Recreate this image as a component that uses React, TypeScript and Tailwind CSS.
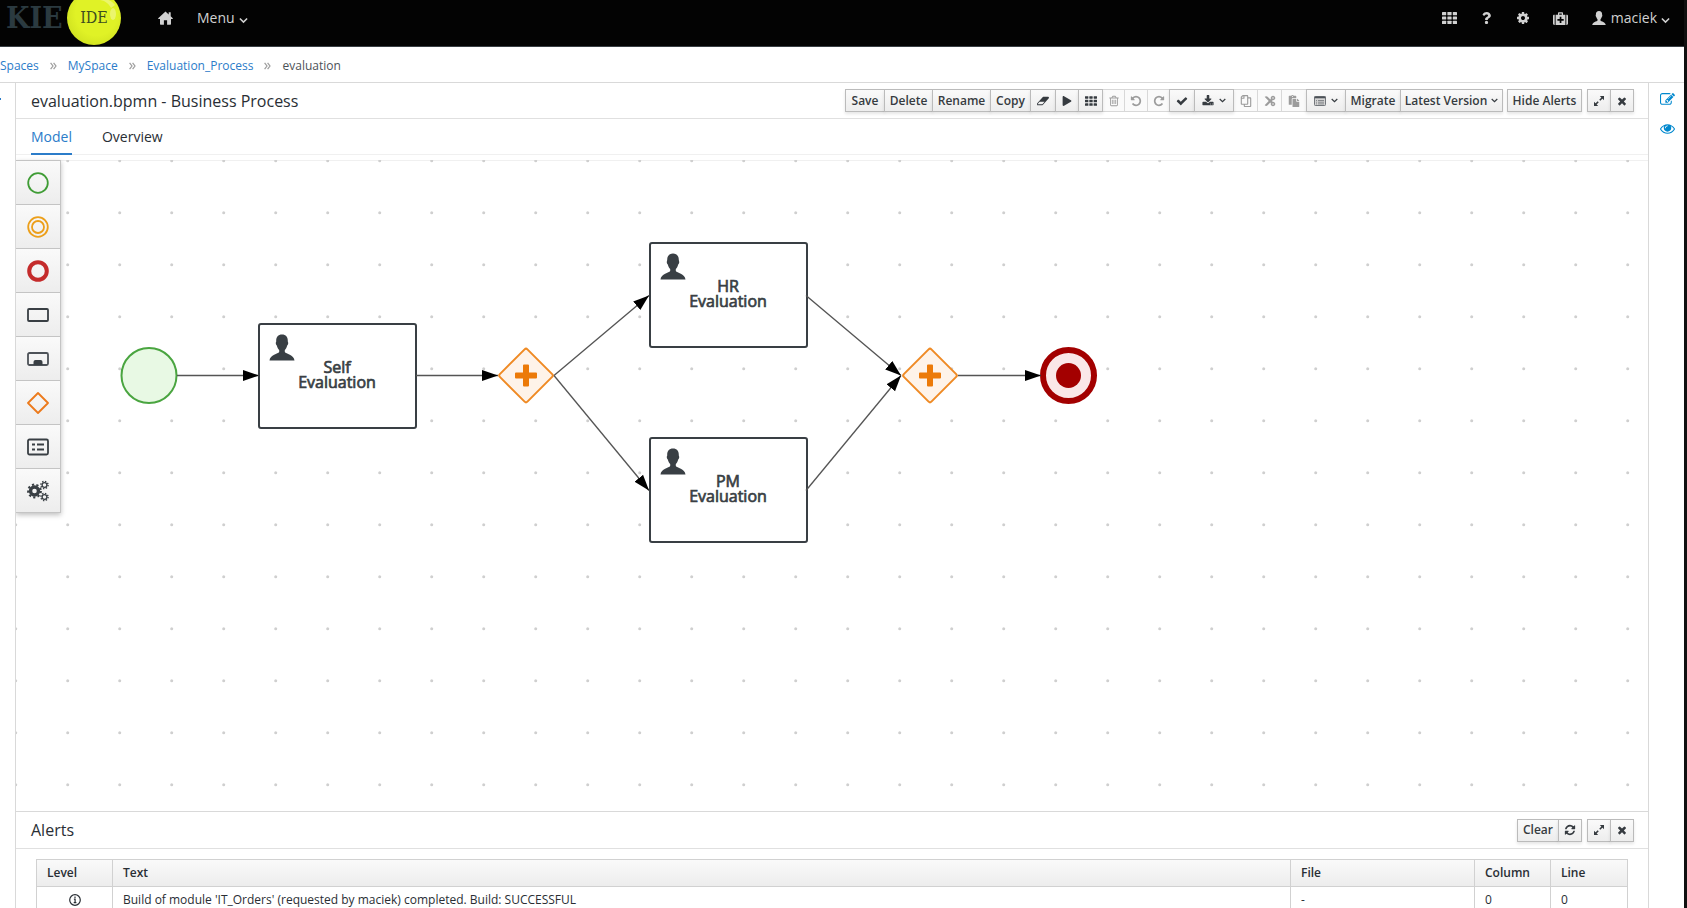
import { useState, type ReactNode } from 'react';
import { FaCut, FaPaste, FaPlay, FaQuestion, FaRegCopy } from 'react-icons/fa';

const paths = {
  eye: 'M1664 960q-152-236-381-353 61 104 61 225 0 185-131.5 316.5t-316.5 131.5-316.5-131.5-131.5-316.5q0-121 61-225-229 117-381 353 133 205 333.5 326.5t434.5 121.5 434.5-121.5 333.5-326.5zm-720-384q0-20-14-34t-34-14q-125 0-214.5 89.5t-89.5 214.5q0 20 14 34t34 14 34-14 14-34q0-86 61-147t147-61q20 0 34-14t14-34zm848 384q0 34-20 69-140 230-376.5 368.5t-499.5 138.5-499.5-139-376.5-368q-20-35-20-69t20-69q140-229 376.5-368t499.5-139 499.5 139 376.5 368q20 35 20 69z',
  edit: 'M888 1184l116-116-152-152-116 116v56h96v96h56zm440-720q-16-16-33 1l-350 350q-17 17-1 33t33-1l350-350q17-17 1-33zm80 594v190q0 119-84.5 203.5t-203.5 84.5h-832q-119 0-203.5-84.5t-84.5-203.5v-832q0-119 84.5-203.5t203.5-84.5h832q63 0 117 25 15 7 18 23 3 17-9 29l-49 49q-14 14-32 8-23-6-45-6h-832q-66 0-113 47t-47 113v832q0 66 47 113t113 47h832q66 0 113-47t47-113v-126q0-13 9-22l64-64q15-15 35-7t20 29zm-96-738l288 288-672 672h-288v-288zm444 132l-92 92-288-288 92-92q28-28 68-28t68 28l152 152q28 28 28 68t-28 68z',
  trash: 'M704 736v576q0 14-9 23t-23 9h-64q-14 0-23-9t-9-23v-576q0-14 9-23t23-9h64q14 0 23 9t9 23zm256 0v576q0 14-9 23t-23 9h-64q-14 0-23-9t-9-23v-576q0-14 9-23t23-9h64q14 0 23 9t9 23zm256 0v576q0 14-9 23t-23 9h-64q-14 0-23-9t-9-23v-576q0-14 9-23t23-9h64q14 0 23 9t9 23zm128 724v-948h-896v948q0 22 7 40.5t14.5 27 10.5 8.5h832q3 0 10.5-8.5t14.5-27 7-40.5zm-672-1076h448l-48-117q-7-9-17-11h-317q-10 2-17 11zm928 32v64q0 14-9 23t-23 9h-96v948q0 83-47 143.5t-113 60.5h-832q-66 0-113-58.5t-47-141.5v-952h-96q-14 0-23-9t-9-23v-64q0-14 9-23t23-9h309l70-167q15-37 54-63t79-26h320q40 0 79 26t54 63l70 167h309q14 0 23 9t9 23z',
  refresh: 'M1639 1056q0 5-1 7-64 268-268 434.5t-478 166.5q-146 0-282.5-55t-243.5-157l-129 129q-19 19-45 19t-45-19-19-45v-448q0-26 19-45t45-19h448q26 0 45 19t19 45-19 45l-137 137q71 66 161 102t187 36q134 0 250-65t186-179q11-17 53-117 8-23 30-23h192q13 0 22.5 9.5t9.5 22.5zm25-800v448q0 26-19 45t-45 19h-448q-26 0-45-19t-19-45 19-45l138-138q-148-137-349-137-134 0-250 65t-186 179q-11 17-53 117-8 23-30 23h-199q-13 0-22.5-9.5t-9.5-22.5v-7q65-268 270-434.5t480-166.5q146 0 284 55.5t245 156.5l130-129q19-19 45-19t45 19 19 45z',
  undo: 'M1664 896q0 156-61 298t-164 245-245 164-298 61q-172 0-327-72.5t-264-204.5q-7-10-6.5-22.5t8.5-20.5l137-138q10-9 25-9 16 2 23 12 73 95 179 147t225 52q104 0 198.5-40.5t163.5-109.5 109.5-163.5 40.5-198.5-40.5-198.5-109.5-163.5-163.5-109.5-198.5-40.5q-98 0-188 35.5t-160 101.5l137 138q31 30 14 69-17 40-59 40h-448q-26 0-45-19t-19-45v-448q0-42 40-59 39-17 69 14l130 129q107-101 244.5-156.5t284.5-55.5q156 0 298 61t245 164 164 245 61 298z',
  eraser: 'M832 1408l336-384h-768l-336 384h768zm1013-1077q15 34 9.5 71.5t-30.5 65.5l-896 1024q-38 44-96 44h-768q-38 0-69.5-20.5t-47.5-54.5q-15-34-9.5-71.5t30.5-65.5l896-1024q38-44 96-44h768q38 0 69.5 20.5t47.5 54.5z',
  check: 'M1671 566q0 40-28 68l-724 724-136 136q-28 28-68 28t-68-28l-136-136-362-362q-28-28-28-68t28-68l136-136q28-28 68-28t68 28l294 295 656-657q28-28 68-28t68 28l136 136q28 28 28 68z',
  close: 'M1490 1322q0 40-28 68l-136 136q-28 28-68 28t-68-28l-294-294-294 294q-28 28-68 28t-68-28l-136-136q-28-28-28-68t28-68l294-294-294-294q-28-28-28-68t28-68l136-136q28-28 68-28t68 28l294 294 294-294q28-28 68-28t68 28l136 136q28 28 28 68t-28 68l-294 294 294 294q28 28 28 68z',
  download: 'M1344 1344q0-26-19-45t-45-19-45 19-19 45 19 45 45 19 45-19 19-45zm256 0q0-26-19-45t-45-19-45 19-19 45 19 45 45 19 45-19 19-45zm128-224v320q0 40-28 68t-68 28h-1472q-40 0-68-28t-28-68v-320q0-40 28-68t68-28h465l135 136q58 56 136 56t136-56l136-136h464q40 0 68 28t28 68zm-325-569q17 41-14 70l-448 448q-18 19-45 19t-45-19l-448-448q-31-29-14-70 17-39 59-39h256v-448q0-26 19-45t45-19h256q26 0 45 19t19 45v448h256q42 0 59 39z',
  cog: 'M1152 896q0-106-75-181t-181-75-181 75-75 181 75 181 181 75 181-75 75-181zm512-109v222q0 12-8 23t-20 13l-185 28q-19 54-39 91 35 50 107 138 10 12 10 25t-9 23q-27 37-99 108t-94 71q-12 0-26-9l-138-108q-44 23-91 38-16 136-29 186-7 28-36 28h-222q-14 0-24.5-8.5t-11.5-21.5l-28-184q-49-16-90-37l-141 107q-10 9-25 9-14 0-25-11-126-114-165-168-7-10-7-23 0-12 8-23 15-21 51-66.5t54-70.5q-27-50-41-99l-183-27q-13-2-21-12.5t-8-23.5v-222q0-12 8-23t19-13l186-28q14-46 39-92-40-57-107-138-10-12-10-24 0-10 9-23 26-36 98.5-107.5t94.5-71.5q13 0 26 10l138 107q44-23 91-38 16-136 29-186 7-28 36-28h222q14 0 24.5 8.5t11.5 21.5l28 184q49 16 90 37l142-107q9-9 24-9 13 0 25 10 129 119 165 170 7 8 7 22 0 12-8 23-15 21-51 66.5t-54 70.5q26 50 41 98l183 28q13 2 21 12.5t8 23.5z',
};

const userPath =
  'M12.5 0C8.6 0 6.6 2.6 6.7 6.4c.1 1-.6 1.300-.4 2.500.2 1.300.8 1.600 1.100 2.300.4 2 1.300 3.200 2.300 4.200v2.200C8.600 19.600 .5 20.300 0 26h25c-.5-5.700-8.600-6.400-9.700-8.400v-2.200c1-1 1.900-2.200 2.300-4.200.3-.7.900-1 1.100-2.300.2-1.200-.5-1.500-.4-2.500C18.400 2.600 16.400 0 12.500 0z';

function Icon({ name, className = 'size-3' }: { name: keyof typeof paths; className?: string }) {
  return (
    <svg viewBox={name === 'eraser' ? '0 0 1856 1792' : '0 0 1792 1792'} fill="currentColor" className={className} aria-hidden="true">
      <path d={paths[name]} />
    </svg>
  );
}

function Chevron({ className = 'size-[7px]' }: { className?: string }) {
  return (
    <svg viewBox="0 0 10 10" fill="none" stroke="currentColor" strokeWidth="1.7" className={className} aria-hidden="true">
      <path d="M1 2.800l4 4 4-4" />
    </svg>
  );
}

function GridIcon({ className = 'size-3' }: { className?: string }) {
  return (
    <svg viewBox="0 0 15 12" fill="currentColor" className={className} aria-hidden="true">
      {[0, 4.4, 8.8].map((y) =>
        [0, 5.4, 10.8].map((x) => <rect key={`${x}-${y}`} x={x} y={y} width="4.2" height="3.2" rx="0.5" />),
      )}
    </svg>
  );
}

function ExpandIcon() {
  return (
    <svg viewBox="0 0 12 12" fill="currentColor" className="size-3" aria-hidden="true">
      <path d="M6.8 1h4.2v4.2zM1 6.8V11h4.2z" />
      <path d="M9.5 2.5L6.8 5.2M2.5 9.5l2.7-2.7" stroke="currentColor" strokeWidth="1.6" fill="none" />
    </svg>
  );
}

function ListIcon() {
  return (
    <svg viewBox="0 0 12 10" className="h-[10px] w-3" aria-hidden="true">
      <rect x="0.5" y="0.5" width="11" height="9" rx="0.8" fill="#d4d4d4" stroke="#72767b" />
      <path d="M0.5 1.400h11" stroke="#4d5258" strokeWidth="1.800" />
      <path d="M2 4.500h1M2 6.200h1M2 7.900h1M4 4.500h6M4 6.200h6M4 7.900h6" stroke="#72767b" strokeWidth="0.800" />
    </svg>
  );
}

type ToolProps = {
  label?: string;
  width: string;
  disabled?: boolean;
  children?: ReactNode;
};

function Tool({ label, width, disabled, children }: ToolProps) {
  return (
    <button
      type="button"
      aria-label={label}
      disabled={disabled}
      className={`-ml-px flex h-[23px] items-center justify-center gap-1 border text-xs font-semibold whitespace-nowrap first:ml-0 ${width} ${
        disabled
          ? 'border-[#d8d8d8] bg-[#fafafa] text-[#9c9c9c]'
          : 'relative border-[#bbb] bg-linear-to-b from-[#fafafa] to-[#ededed] text-[#363b40] shadow-[0_2px_3px_rgba(3,3,3,0.1)]'
      }`}
    >
      {children}
    </button>
  );
}

function WindowTools({ name }: { name: string }) {
  return (
    <div className="flex">
      <Tool label={`Expand ${name}`} width="w-6">
        <ExpandIcon />
      </Tool>
      <Tool label={`Close ${name}`} width="w-6">
        <Icon name="close" />
      </Tool>
    </div>
  );
}

function Header() {
  return (
    <header className="flex h-[47px] shrink-0 items-start justify-between overflow-hidden border-b border-[#393f44] bg-[#030303] text-[#d1d1d1]">
      <div className="flex h-9 items-center">
        <a href="#" aria-label="KIE IDE" className="flex items-center gap-2 pl-[6px]">
          <span className="w-[53px] font-['DejaVu_Serif_Condensed','DejaVu_Serif',serif] text-[30px] leading-none font-bold text-[#2b3a40]">
            KIE
          </span>
          <span className="relative flex size-[54px] items-center justify-center overflow-hidden rounded-full bg-radial-[at_55%_40%] from-[#e0f226] from-50% to-[#c3d41b]">
            <svg viewBox="0 0 54 54" className="absolute inset-0" aria-hidden="true">
              <path d="M33 9c6 1 9 4 11 8l4-3C45 10 40 7 33 9z" fill="#f0f68a" opacity="0.7" />
              <ellipse cx="46" cy="23" rx="3" ry="6" fill="#f0f68a" opacity="0.7" />
            </svg>
            <span className="relative font-['DejaVu_Serif_Condensed','DejaVu_Serif',serif] text-base leading-none text-[#3d4d20]">
              IDE
            </span>
          </span>
        </a>
        <a href="#" aria-label="Home" className="ml-[37px]">
          <svg viewBox="0 0 15 14" fill="currentColor" className="h-[14px] w-[15px]" aria-hidden="true">
            <path d="M7.5.5L.2 7.300c-.2.300 0 .6.300.600H2V13c0 .5.200.7.700.7h3.200V9.200h3.200v4.500h3.200c.5 0 .7-.2.700-.7V7.900h1.500c.3 0 .5-.3.300-.600L12.700 5.200V1.300h-2v2.200z" />
          </svg>
        </a>
        <button type="button" className="ml-6 flex items-center gap-1 text-sm font-medium">
          Menu <Chevron className="mt-1 size-[9px]" />
        </button>
      </div>
      <div className="flex h-9 items-center pr-[14px]">
        <button type="button" aria-label="Apps" className="mr-[25px]">
          <GridIcon className="h-3 w-[15px]" />
        </button>
        <button type="button" aria-label="Help" className="mr-[25px]">
          <FaQuestion className="h-3 w-[9px]" />
        </button>
        <button type="button" aria-label="Settings" className="mr-[23px]">
          <Icon name="cog" className="size-[14px]" />
        </button>
        <button type="button" aria-label="Diagnostics" className="mr-6">
          <svg viewBox="0 0 15 13" fill="currentColor" className="h-[13px] w-[15px]" aria-hidden="true">
            <path d="M5 3V1.200C5 .5 5.300.2 6 .2h3c.7 0 1 .3 1 1V3H8.800V1.400H6.200V3z" />
            <path d="M1.700 2.800v10.100H1.300C.5 12.900 0 12.400 0 11.600V4.100c0-.8.500-1.300 1.300-1.300zM13.300 2.800v10.100h.4c.8 0 1.300-.5 1.300-1.300V4.100c0-.8-.5-1.300-1.300-1.300z" />
            <path d="M2.600 2.800h9.800v10.100H2.600zM6.700 4.700v2.300H4.400v1.700h2.300V11h1.700V8.700h2.300V7H8.400V4.700z" fillRule="evenodd" />
          </svg>
        </button>
        <button type="button" className="flex items-center gap-1 text-sm font-medium">
          <svg viewBox="0 0 25 26" fill="currentColor" className="mr-px size-[14px]" aria-hidden="true">
            <path d={userPath} />
          </svg>
          maciek <Chevron className="mt-1 size-[9px]" />
        </button>
      </div>
    </header>
  );
}

const crumbs = ['Spaces', 'MySpace', 'Evaluation_Process'];

function Breadcrumbs() {
  return (
    <nav aria-label="Breadcrumb" className="flex h-9 shrink-0 items-center border-b border-[#d9d9d9] pt-[3px] text-xs">
      {crumbs.map((crumb) => (
        <span key={crumb} className="flex items-center">
          <a href="#" className="text-[#2b7cc9]">
            {crumb}
          </a>
          <svg viewBox="0 0 7 8" fill="none" stroke="#9c9c9c" strokeWidth="1.2" className="mx-[11px] h-2 w-[7px]" aria-hidden="true">
            <path d="M.6.8L3 4 .6 7.200M3.600.8L6 4 3.600 7.200" />
          </svg>
        </span>
      ))}
      <span className="text-[#4d5258]">evaluation</span>
    </nav>
  );
}

function EditorToolbar() {
  return (
    <div className="flex gap-1">
      <div className="flex">
        <Tool width="w-10">Save</Tool>
        <Tool width="w-[49px]">Delete</Tool>
        <Tool width="w-[59px]">Rename</Tool>
        <Tool width="w-[41px]">Copy</Tool>
        <Tool label="Clear diagram" width="w-[26px]">
          <Icon name="eraser" />
        </Tool>
        <Tool label="Run" width="w-6">
          <FaPlay className="size-[10px]" />
        </Tool>
        <Tool label="Grid" width="w-[25px]">
          <GridIcon className="h-[10px] w-3" />
        </Tool>
        <Tool label="Delete selection" width="w-[23px]" disabled>
          <Icon name="trash" />
        </Tool>
        <Tool label="Undo" width="w-6" disabled>
          <Icon name="undo" />
        </Tool>
        <Tool label="Redo" width="w-[23px]" disabled>
          <Icon name="undo" className="size-3 -scale-x-100" />
        </Tool>
        <Tool label="Validate" width="w-[26px]">
          <Icon name="check" />
        </Tool>
        <Tool label="Download" width="w-10">
          <Icon name="download" />
          <Chevron className="ml-px size-[7px]" />
        </Tool>
        <Tool label="Copy selection" width="w-[25px]" disabled>
          <FaRegCopy className="size-3 -scale-x-100" />
        </Tool>
        <Tool label="Cut selection" width="w-[25px]" disabled>
          <FaCut className="size-3 -scale-x-100" />
        </Tool>
        <Tool label="Paste selection" width="w-[26px]" disabled>
          <FaPaste className="size-3" />
        </Tool>
        <Tool label="View" width="w-10">
          <ListIcon />
          <Chevron className="ml-px size-[7px]" />
        </Tool>
        <Tool width="w-14">Migrate</Tool>
        <Tool width="w-[103px]">
          Latest Version <Chevron />
        </Tool>
      </div>
      <div className="flex">
        <Tool width="w-[75px]">Hide Alerts</Tool>
      </div>
      <div className="ml-px flex">
        <WindowTools name="editor" />
      </div>
    </div>
  );
}

const palette: { label: string; shape: ReactNode }[] = [
  { label: 'Start events', shape: <circle cx="11" cy="11" r="9.8" stroke="#3f9c35" strokeWidth="1.8" /> },
  {
    label: 'Intermediate events',
    shape: (
      <g stroke="#ec9f1a" strokeWidth="1.8">
        <circle cx="11" cy="11" r="9.8" />
        <circle cx="11" cy="11" r="6" />
      </g>
    ),
  },
  { label: 'End events', shape: <circle cx="11" cy="11" r="8.8" stroke="#c42b2b" strokeWidth="4" /> },
  { label: 'Activities', shape: <rect x="1" y="5" width="20" height="12" rx="1" stroke="#393f44" strokeWidth="1.8" /> },
  {
    label: 'Subprocesses',
    shape: (
      <g>
        <rect x="1" y="5" width="20" height="12" rx="1.5" stroke="#4d5258" strokeWidth="1.8" />
        <path d="M6.500 17v-3q0-2 2-2h5q2 0 2 2v3z" fill="#393f44" />
      </g>
    ),
  },
  { label: 'Gateways', shape: <path d="M11 1L21 11 11 21 1 11z" stroke="#ec7a1c" strokeWidth="1.8" strokeLinejoin="round" /> },
  {
    label: 'Data objects',
    shape: (
      <g stroke="#393f44">
        <rect x="1" y="3.5" width="20" height="15" rx="1.5" strokeWidth="1.8" />
        <path d="M5 8.500h3M5 13.500h3M10 8.500h7M10 13.500h7" strokeWidth="2.2" />
      </g>
    ),
  },
  {
    label: 'Service tasks',
    shape: (
      <g stroke="#393f44">
        <circle cx="7.5" cy="11" r="4" strokeWidth="3.4" />
        <circle cx="7.5" cy="11" r="6.4" strokeWidth="2" strokeDasharray="2.2 2.268" />
        <circle cx="17.5" cy="5" r="2.4" strokeWidth="1.3" />
        <circle cx="17.5" cy="5" r="3.6" strokeWidth="1.4" strokeDasharray="1.4 1.427" />
        <circle cx="17.5" cy="17" r="2.4" strokeWidth="1.3" />
        <circle cx="17.5" cy="17" r="3.6" strokeWidth="1.4" strokeDasharray="1.4 1.427" />
      </g>
    ),
  },
];

function Palette() {
  return (
    <div className="absolute top-[5px] left-0 w-[45px] border-t border-r border-[#c4c4c4] shadow-[0_2px_5px_rgba(3,3,3,0.25)]">
      {palette.map(({ label, shape }) => (
        <button
          key={label}
          type="button"
          aria-label={label}
          className="flex h-11 w-full items-center justify-center border-b border-[#c4c4c4] bg-linear-to-b from-[#fafafa] to-[#ededed]"
        >
          <svg viewBox="0 0 22 22" fill="none" className="size-[22px]" aria-hidden="true">
            {shape}
          </svg>
        </button>
      ))}
    </div>
  );
}

const tasks = [
  { name: 'Self', x: 242, y: 168 },
  { name: 'HR', x: 633, y: 87 },
  { name: 'PM', x: 633, y: 282 },
];

const flows = [
  [161, 220, 243, 220],
  [400, 220, 482, 220],
  [538, 220, 633, 140],
  [538, 220, 633, 335],
  [790, 140, 885, 220],
  [790, 335, 885, 220],
  [942, 220, 1025, 220],
];

function Diagram() {
  return (
    <svg className="absolute inset-0 size-full font-['Open_Sans',sans-serif]" role="img" aria-label="Evaluation process">
      <defs>
        <pattern id="dots" width="52" height="52" patternUnits="userSpaceOnUse" x="26" y="32">
          <circle cx="25.7" cy="25.7" r="1.5" fill="#cfcfcf" />
        </pattern>
        <marker id="arrow" markerUnits="userSpaceOnUse" markerWidth="17" markerHeight="12" refX="16" refY="6" orient="auto">
          <path d="M0 0.500L16 6 0 11.500z" fill="#000" />
        </marker>
      </defs>
      <path d="M0 5.500H4000" stroke="#f0f0f0" />
      <rect y="5" width="100%" height="100%" fill="url(#dots)" />
      <circle cx="133" cy="220.500" r="27.500" fill="#e8f9e4" stroke="#4aa540" strokeWidth="2" />
      {tasks.map(({ name, x, y }) => (
        <g key={name} transform={`translate(${x} ${y})`}>
          <rect x="1" y="1" width="157" height="104" rx="2" fill="#fff" stroke="#393f44" strokeWidth="2" />
          <path d={userPath} transform="translate(11.500 11.500)" fill="#393f44" />
          <text textAnchor="middle" className="text-base" fill="#393f44" stroke="#393f44" strokeWidth="0.7">
            <tspan x="79" y="50">
              {name}
            </tspan>
            <tspan x="79" y="65">
              Evaluation
            </tspan>
          </text>
        </g>
      ))}
      {[510, 914].map((x) => (
        <g key={x} transform={`translate(${x} 220.500)`}>
          <rect x="-19.5" y="-19.5" width="39" height="39" rx="2" transform="rotate(45)" fill="#fef3e9" stroke="#ef8a24" strokeWidth="2" />
          <path d="M-2 -11h4q1 0 1 1v7h7q1 0 1 1v4q0 1 -1 1h-7v7q0 1 -1 1h-4q-1 0 -1 -1v-7h-7q-1 0 -1 -1v-4q0 -1 1 -1h7v-7q0 -1 1 -1z" fill="#ec7a08" />
        </g>
      ))}
      <circle cx="1052.500" cy="220.500" r="25.500" fill="#fae7e8" stroke="#a30000" strokeWidth="6" />
      <circle cx="1052.500" cy="220.500" r="12.500" fill="#a30000" />
      {flows.map(([x1, y1, x2, y2]) => (
        <line
          key={`${x1}-${y1}-${y2}`}
          x1={x1}
          y1={y1}
          x2={x2}
          y2={y2}
          transform="translate(0 0.500)"
          stroke="#555"
          strokeWidth="1.3"
          markerEnd="url(#arrow)"
        />
      ))}
    </svg>
  );
}

const cell = 'border-l border-[#d1d1d1] pl-[10px] text-left';

function Alerts() {
  return (
    <section aria-label="Alerts" className="shrink-0 border-t border-[#d9d9d9]">
      <div className="flex h-[37px] items-center justify-between border-b border-[#e0e0e0] pr-[14px] pl-[15px]">
        <h2 className="text-base text-[#292e34]">Alerts</h2>
        <div className="flex gap-[5px]">
          <div className="flex">
            <Tool width="w-[42px]">Clear</Tool>
            <Tool label="Refresh alerts" width="w-6">
              <Icon name="refresh" />
            </Tool>
          </div>
          <WindowTools name="alerts" />
        </div>
      </div>
      <div className="h-[59px] overflow-hidden pt-[10px] pr-5 pl-5">
        <table className="w-full table-fixed border-collapse border border-[#d1d1d1] text-xs text-[#292e34]">
          <thead>
            <tr className="h-[27px] border-b border-[#d1d1d1] bg-linear-to-b from-[#fafafa] to-[#ededed]">
              <th className="w-[76px] pl-[10px] text-left font-semibold">Level</th>
              <th className={`${cell} font-semibold`}>Text</th>
              <th className={`${cell} w-[184px] font-semibold`}>File</th>
              <th className={`${cell} w-[76px] font-semibold`}>Column</th>
              <th className={`${cell} w-[77px] font-semibold`}>Line</th>
            </tr>
          </thead>
          <tbody>
            <tr className="h-[26px]">
              <td>
                <svg viewBox="0 0 12 12" className="mx-auto size-3" role="img" aria-label="Info">
                  <circle cx="6" cy="6" r="5.3" fill="none" stroke="#292e34" strokeWidth="1.2" />
                  <path d="M6 2.600v1.400M4.900 5.200h1.200v3.500M4.700 8.700h2.700" fill="none" stroke="#292e34" strokeWidth="1.2" />
                </svg>
              </td>
              <td className={cell}>Build of module 'IT_Orders' (requested by maciek) completed. Build: SUCCESSFUL</td>
              <td className={cell}>-</td>
              <td className={cell}>0</td>
              <td className={cell}>0</td>
            </tr>
          </tbody>
        </table>
      </div>
    </section>
  );
}

export default function App() {
  const [tab, setTab] = useState('Model');

  return (
    <div className="flex h-screen flex-col overflow-hidden border-r-3 border-[#101010] bg-white font-['Open_Sans',sans-serif]">
      <Header />
      <Breadcrumbs />
      <div className="flex min-h-0 flex-1">
        <div className="w-[15px] shrink-0 pt-[15px]">
          <div className="h-[2px] w-px bg-[#2b7cc9]" />
        </div>
        <main className="flex min-w-0 flex-1 flex-col border-x border-[#d9d9d9]">
          <div className="flex h-9 shrink-0 items-center justify-between border-b border-[#e0e0e0] pr-[14px] pl-[15px]">
            <h1 className="text-base whitespace-nowrap text-[#292e34]">evaluation.bpmn - Business Process</h1>
            <EditorToolbar />
          </div>
          <div role="tablist" className="flex h-9 shrink-0 gap-[30px] border-b border-[#f0f0f0] pl-[15px] text-sm">
            {['Model', 'Overview'].map((name) => (
              <button
                key={name}
                type="button"
                role="tab"
                aria-selected={tab === name}
                onClick={() => setTab(name)}
                className={`-mb-px border-b-2 pt-[2px] ${tab === name ? 'border-[#2b7cc9] text-[#2b7cc9]' : 'border-transparent text-[#292e34]'}`}
              >
                {name}
              </button>
            ))}
          </div>
          <div className="relative min-h-0 flex-1 overflow-hidden">
            <Diagram />
            <Palette />
          </div>
          <Alerts />
        </main>
        <aside className="flex w-[35px] shrink-0 flex-col items-center gap-[14px] pt-[9px] pl-[2px] text-[#0088ce]">
          <button type="button" aria-label="Properties">
            <Icon name="edit" className="size-[15px]" />
          </button>
          <button type="button" aria-label="Explore diagram">
            <Icon name="eye" className="size-[15px]" />
          </button>
        </aside>
      </div>
    </div>
  );
}
